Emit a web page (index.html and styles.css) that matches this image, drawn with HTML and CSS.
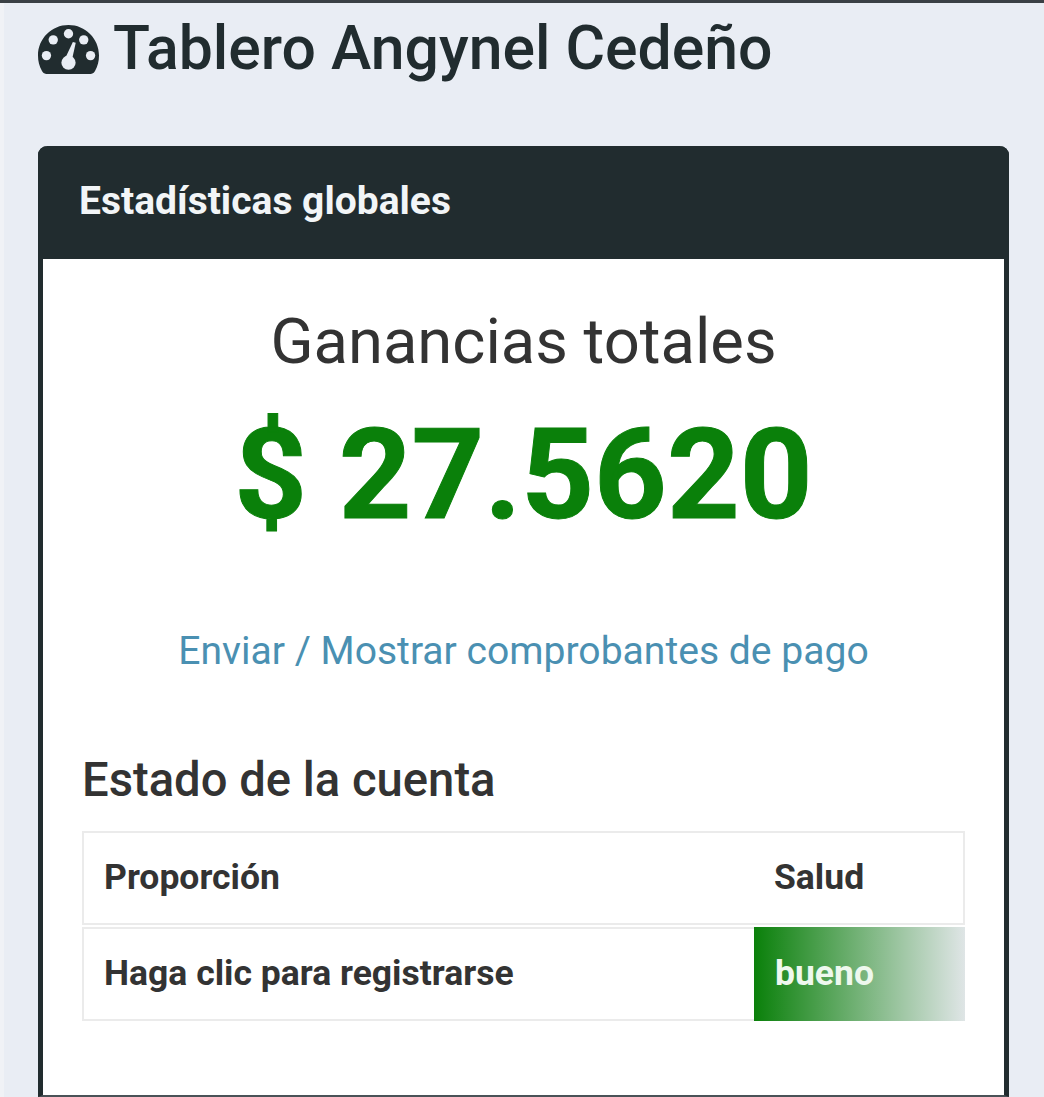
FILE: index.html
```html
<!DOCTYPE html>
<html lang="es">
<head>
<meta charset="utf-8">
<title>Tablero</title>
<link rel="stylesheet" href="styles.css">
</head>
<body>
<div class="topline"></div>
<main class="page">
  <h1 class="title">
    <svg class="gauge" viewBox="0 0 60 48" aria-hidden="true">
      <path fill="#212c2f" d="M30 0C13.400 0 0 13.400 0 30c0 5.500 1.300 10.700 3.800 15 .9 1.800 2.200 3 4.200 3h44c2 0 3.300-1.200 4.200-3 2.500-4.300 3.800-9.500 3.800-15C60 13.400 46.600 0 30 0z"/>
      <g fill="#e9edf4">
        <circle cx="30" cy="8.500" r="4.600"/>
        <circle cx="15" cy="14.500" r="4.600"/>
        <circle cx="45" cy="14.500" r="4.600"/>
        <circle cx="8.300" cy="30" r="4.600"/>
        <circle cx="51.700" cy="30" r="4.600"/>
        <circle cx="30" cy="37" r="7"/>
        <path d="M34.300 16.500l2.800.8-3.500 16-6.500-1.500z"/>
      </g>
    </svg>
    <span>Tablero Angynel Cedeño</span>
  </h1>
  <section class="card">
    <header class="card-head">Estadísticas globales</header>
    <div class="card-body">
      <h2 class="earn-label">Ganancias totales</h2>
      <p class="earn-value">$ 27.5620</p>
      <a class="proof-link" href="#">Enviar / Mostrar comprobantes de pago</a>
      <h3 class="status-title">Estado de la cuenta</h3>
      <div class="status">
        <div class="row">
          <div class="cell-main">Proporción</div>
          <div class="cell-side">Salud</div>
        </div>
        <div class="row">
          <div class="cell-main">Haga clic para registrarse</div>
          <div class="cell-side good">bueno</div>
        </div>
      </div>
    </div>
  </section>
</main>
</body>
</html>
```
FILE: styles.css
```css
* { box-sizing: border-box; }
html, body { margin: 0; height: 1097px; overflow: hidden; }
body {
  background: #e9edf4;
  color: #333;
  font-family: Roboto, "Noto Sans", sans-serif;
}
.topline { height: 3px; background: #3a4045; }
.page { padding: 0 35px 0 34px; border-left: 4px solid #f0f2f6; display: flex; flex-direction: column; height: 1094px; }
.title {
  margin: 11px 0 0;
  height: 70px;
  display: flex;
  align-items: center;
  gap: 14px;
  font-size: 60.7px;
  font-weight: 500;
  line-height: 70px;
  color: #212c2f;
}
.gauge { width: 61px; height: 49px; flex: none; }
.card {
  margin-top: 62px;
  flex: 1;
  background: #fff;
  border: 5px solid #212c2f;
  border-top: 0;
  border-bottom: 2px solid #4a5257;
  border-radius: 9px 9px 0 0;
  display: flex;
  flex-direction: column;
}
.card-head {
  background: #212c2f;
  color: #f2f5f7;
  height: 113px;
  margin: 0 -5px;
  padding: 0 41px 4px;
  border-radius: 9px 9px 0 0;
  display: flex;
  align-items: center;
  font-size: 39px;
  font-weight: 700;
}
.card-body { padding: 47px 39px 0; text-align: center; }
.earn-label { margin: 0; font-size: 63.3px; font-weight: 400; line-height: 70px; color: #333; }
.earn-value { margin: 34px 0 0; font-size: 127px; font-weight: 700; line-height: 130px; color: #0a800a; -webkit-text-stroke: 1px #0a800a; }
.proof-link { display: block; margin-top: 86px; font-size: 39.1px; line-height: 50px; color: #4a90b2; text-decoration: none; }
.status-title { margin: 74px 0 0; text-align: left; font-size: 47.2px; font-weight: 500; line-height: 60px; color: #333; }
.status { margin-top: 21px; font-size: 35.5px; font-weight: 700; text-align: left; color: #333; }
.row { display: flex; height: 94px; border: 2px solid #ebebeb; margin-bottom: 2px; }
.cell-main { flex: 1; padding: 0 20px 2px; display: flex; align-items: center; }
.cell-side { width: 211px; padding: 0 21px 2px 22px; display: flex; align-items: center; }
.good { margin: -2px -2px -2px 0; padding-left: 21px; color: #eef8ee; background: linear-gradient(to right, #0a800a, #dfe5e6); }
```
